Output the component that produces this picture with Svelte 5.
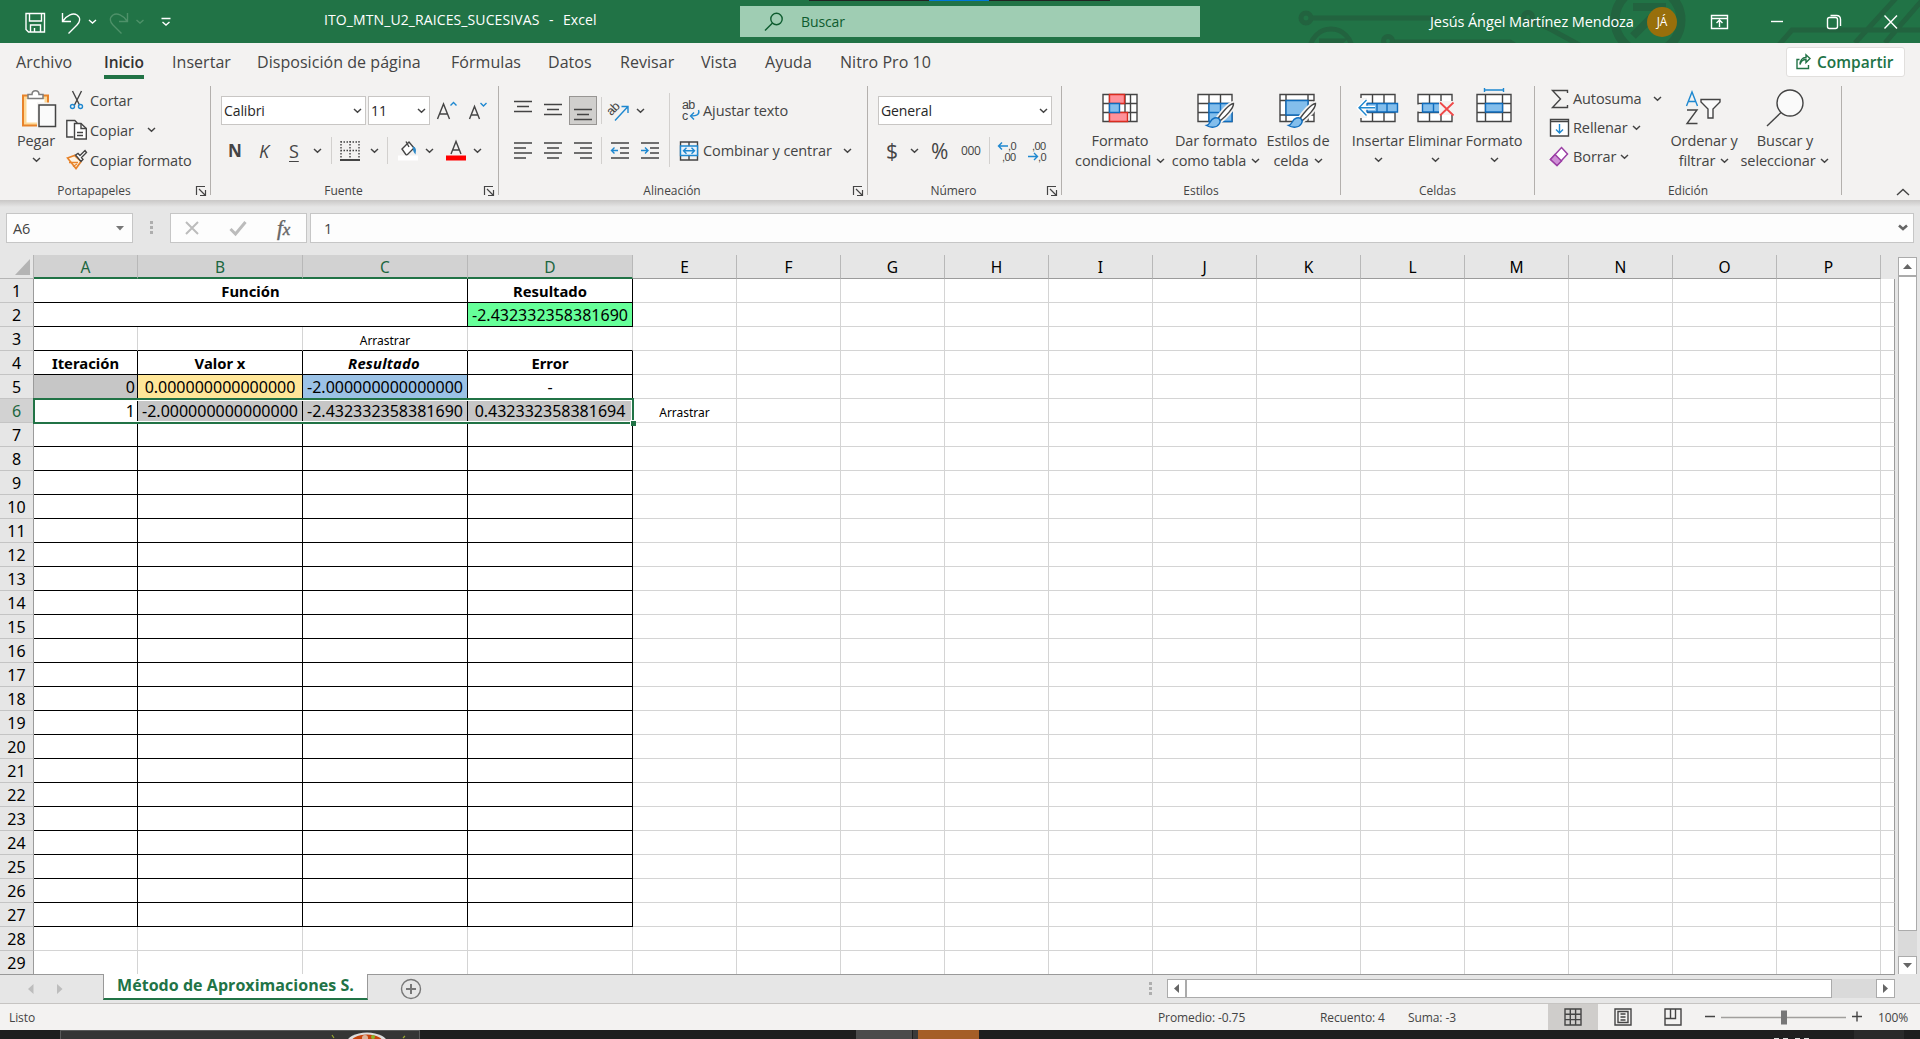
<script>
  // --- Ribbon tabs ---
  const tabs = [
    { name: 'Archivo', width: 88 },
    { name: 'Inicio', width: 68 },
    { name: 'Insertar', width: 85 },
    { name: 'Disposición de página', width: 194 },
    { name: 'Fórmulas', width: 97 },
    { name: 'Datos', width: 72 },
    { name: 'Revisar', width: 81 },
    { name: 'Vista', width: 64 },
    { name: 'Ayuda', width: 75 },
    { name: 'Nitro Pro 10', width: 110 },
  ];

  // --- Sheet data ---
  const columns = 'ABCDEFGHIJKLMNOP'.split('');
  const emptyColumns = columns.slice(4);

  const cells = {
    4: [
      { text: 'Iteración', cls: 'bold' },
      { text: 'Valor x', cls: 'bold' },
      { text: 'Resultado', cls: 'bold italic' },
      { text: 'Error', cls: 'bold' },
    ],
    5: [
      { text: '0', cls: 'right gray' },
      { text: '0.000000000000000', cls: 'yellow' },
      { text: '-2.000000000000000', cls: 'blue' },
      { text: '-', cls: '' },
    ],
    6: [
      { text: '1', cls: 'right' },
      { text: '-2.000000000000000', cls: 'gray' },
      { text: '-2.432332358381690', cls: 'gray' },
      { text: '0.432332358381694', cls: 'gray' },
    ],
  };
  const blank = [0, 1, 2, 3].map(() => ({ text: '', cls: '' }));

  let rows = [];
  for (let n = 1; n <= 29; n++) {
    let row = cells[n] || blank;
    if (n === 1) row = [{ text: 'Función', cls: 'merged bold' }, { text: 'Resultado', cls: 'bold' }];
    if (n === 2) row = [{ text: '', cls: 'merged' }, { text: '-2.432332358381690', cls: 'green' }];
    if (n === 3) row = blank.map((c, i) => (i === 2 ? { text: 'Arrastrar', cls: 'small' } : c));
    rows.push({ n, row, boxed: n !== 3 && n < 28 });
  }
</script>

{#snippet chev()}
  <svg class="chev" width="9" height="6" viewBox="0 0 9 6"><path d="M1 1l3.500 3.200L8 1" /></svg>
{/snippet}

{#snippet caption(text, launcher)}
  <div class="caption">
    <span>{text}</span>
    {#if launcher}
      <svg width="22" height="12" viewBox="0 0 22 12"><path d="M8.500 10V1.500H17M11 4l6 6M17.500 5v5.500H12" /></svg>
    {/if}
  </div>
{/snippet}

{#snippet brush()}
  <path d="M37.500 10.500C33 11 25 21 22 25.500l2.500 2C29 24 38 15 37.500 10.500z" fill="#f3f2f1" stroke="#f3f2f1" stroke-width="5" />
  <path d="M37.500 10.500C33 11 25 21 22 25.500l2.500 2C29 24 38 15 37.500 10.500z" fill="#fff" />
  <path d="M10.500 32.500c4-.5 3-6 8-7.500 4-1 7 2 5 5.500-2.500 4.500-9 4.500-13 2z" class="bluebox" />
{/snippet}

<div class="window">
  <!-- Title bar -->
  <header class="titlebar">
    <svg class="circuit" width="700" height="43" viewBox="1220 0 700 43">
      <circle cx="1306" cy="18" r="5" />
      <path d="M1312 18h123M1394 42h116l12 8M1532 20l20 10 44 24M1778 46l14-16h128M1855 43l42-46M1885 43l40-46" />
      <circle cx="1331" cy="50" r="21" />
      <path d="M1319 42h20l-14 12" stroke-width="7" />
      <circle cx="1388" cy="41" r="4.500" />
      <circle cx="1528" cy="17" r="4.500" />
      <circle cx="1648" cy="20" r="33" stroke-width="9" />
      <path d="M1633 7h29v20M1662 7l-29 29" stroke-width="8" />
    </svg>
    <div class="quick">
      <svg width="182" height="24" viewBox="0 0 182 24">
        <path d="M2 2.500h18.500v18.500H4.500L2 18.500zM5.500 3v7h12V3M6.500 21v-7h10v7M10.500 21v-4" />
        <path d="M38.500 2v8.500H47M39 10C43 4 49 1.500 53 4c4 3 3 7 0 10l-8.500 8.500" />
        <path d="M65 9l3.500 3L72 9" />
        <g class="dim">
          <path d="M103.500 2v8.500H95M103 10C99 4 93 1.500 89 4c-4 3-3 7 0 10l8.500 8.500" />
          <path d="M112.500 9l3.500 3 3.500-3" />
        </g>
        <path d="M137.500 7.500h9M138.500 11l3.500 3 3.500-3" />
      </svg>
    </div>
    <div class="doc">ITO_MTN_U2_RAICES_SUCESIVAS&nbsp; -&nbsp; Excel</div>
    <div class="search">
      <svg width="20" height="20" viewBox="0 0 20 20"><circle cx="12.500" cy="7" r="5.700" /><path d="M8.500 11L1 18.500" /></svg>
      <span>Buscar</span>
    </div>
    <div class="user">Jesús Ángel Martínez Mendoza</div>
    <div class="avatar">JÁ</div>
    <svg class="controls" width="210" height="20" viewBox="0 0 210 20">
      <path d="M2.500 3.500h16v13h-16zM3 6.500h15M10.500 15V8.500M7.500 11l3-3 3 3" />
      <path d="M62 9.500h12" />
      <path d="M118.500 7.500q0-2 2-2h6q2 0 2 2v7q0 2-2 2h-6q-2 0-2-2zM121.500 3.500h6q4 0 4 4v6.500" />
      <path d="M175.500 3.500l12.500 13M188 3.500l-12.500 13" />
    </svg>
    <div class="topstrip"><i></i></div>
  </header>

  <!-- Ribbon tabs -->
  <nav class="tabs">
    {#each tabs as tab}
      <div class="tab" class:active={tab.name === 'Inicio'} style="width: {tab.width}px"><span>{tab.name}</span></div>
    {/each}
    <button class="share">
      <svg width="15" height="16" viewBox="0 0 15 16"><path d="M3.500 5.500H1v9h11.500V11M4 10.500C5 7 7 5.500 10 5.500V8.500l4-4-4-3.700V3.500C6 3.500 4 7 4 10.500z" /></svg>
      <span>Compartir</span>
    </button>
  </nav>

  <!-- Ribbon -->
  <section class="ribbon">
    <div class="group clipboard">
      <div class="body">
        <div class="big">
          <svg width="36" height="40" viewBox="0 0 36 40">
            <path d="M2 6.500h25v30H2z" fill="#fdd998" stroke="#e8832a" stroke-width="2" />
            <path d="M5.500 10h18v23.500h-18z" fill="#fff" stroke="none" />
            <path d="M7 9.500v-4h4c0-5 7-5 7 0h4v4z" fill="#fff" stroke="#7d7d7d" stroke-width="1.500" />
            <path d="M18 15.500h16.500v22H18z" fill="#fff" stroke="#f3f2f1" stroke-width="4" />
            <path d="M18 16h16.500v21.500H18z" fill="#fafafa" stroke-width="1.500" />
          </svg>
          <span>Pegar</span>
          {@render chev()}
        </div>
        <div class="list">
          <div>
            <svg width="22" height="22" viewBox="0 0 22 22"><path d="M6.500 2l7 14M15.500 2l-7 14" /><circle cx="6.500" cy="17.500" r="2" class="blue" /><circle cx="14.500" cy="17.500" r="2" class="blue" /></svg>
            <span>Cortar</span>
          </div>
          <div>
            <svg width="22" height="22" viewBox="0 0 22 22"><path d="M7.500 18H.8V1.500h8l2.500 2.500" fill="#fafafa" /><path d="M8.500 4.500h6.500l5.300 5v10.500H8.500z" fill="#fff" /><path d="M15 4.500v5h5.500M11 13.500h6M11 16.500h6" /></svg>
            <span>Copiar</span>{@render chev()}
          </div>
          <div>
            <svg width="22" height="22" viewBox="0 0 22 22"><path d="M1.500 9l7-2.500 6.500 6-5 7z" fill="#fdf3e3" stroke="#e8832a" stroke-width="1.700" /><path d="M3 13.500h9M7 17.500l4-2.500" stroke="#e8832a" /><path d="M9.500 6l2.500-1.500 2 2 5-5 1.500 2-5 5 1.500 2-2 2z" fill="#fff" /></svg>
            <span>Copiar formato</span>
          </div>
        </div>
      </div>
      {@render caption('Portapapeles', true)}
    </div>

    <div class="group font">
      <div class="body rows">
        <div class="line first">
          <div class="select">Calibri {@render chev()}</div>
          <div class="select">11 {@render chev()}</div>
          <svg width="30" height="24" viewBox="0 0 30 24"><path d="M5.500 20L11.500 5l6 15M7.500 15h8" /><path d="M18.500 6.500l3-3 3 3" class="blue" /></svg>
          <svg width="30" height="24" viewBox="0 0 30 24"><path d="M6.500 20L11.500 7.500l5 12.500M8 16h7" /><path d="M17.500 4l3 3 3-3" class="blue" /></svg>
        </div>
        <div class="line second">
          <b>N</b><em>K</em><u>S</u>{@render chev()}<i class="sep"></i>
          <svg width="20" height="20" viewBox="0 0 20 20"><path d="M.5 1h19M.5 9.500h19M1 0v18M10 0v18M19 0v18" stroke-dasharray="1.500 1.500" /><path d="M0 19h20" stroke-width="2" /></svg>
          {@render chev()}<i class="sep"></i>
          <svg width="22" height="22" viewBox="0 0 22 22"><path d="M5 9l7-7 5 6-7.500 7.500zM9 1.500l3 5.500" fill="#fff" /><path d="M16 6.500c4 1.500 3 4 2.500 8-2-2-3-5-2.500-8z" fill="#2b88c8" stroke="none" /><path d="M1 15.500h20v5H1z" fill="#fff" stroke="none" /></svg>
          {@render chev()}
          <svg width="22" height="22" viewBox="0 0 22 22"><path d="M6 14l5-12.500L16 14M8 10h6" /><path d="M1 15.500h20v5H1z" fill="#f00" stroke="none" /></svg>
          {@render chev()}
        </div>
      </div>
      {@render caption('Fuente', true)}
    </div>

    <div class="group align">
      <div class="body">
        <div class="rows">
          <div class="line first">
            <svg width="30" height="30" viewBox="0 0 30 30"><path d="M6 5.500h18M9 10.500h12M6 15.500h18" /></svg>
            <svg width="26" height="30" viewBox="0 0 26 30"><path d="M6 8.500h18M9 13.500h12M6 18.500h18" /></svg>
            <svg class="pressed" width="28" height="29" viewBox="0 0 28 29"><path d="M5 13.500h18M8 18.500h12M5 23.500h18" /></svg>
            <i class="sep"></i>
            <svg width="32" height="26" viewBox="0 0 32 26"><text x="5" y="16" class="ab" transform="rotate(-45 10 12)">ab</text><path d="M13 22.500L25.500 9M19.500 8.500h6.500v6.500" class="blue" /></svg>
            {@render chev()}
          </div>
          <div class="line second">
            <svg width="30" height="22" viewBox="0 0 30 22"><path d="M6 3h18M6 8h12M6 13h18M6 18h12" /></svg>
            <svg width="30" height="22" viewBox="0 0 30 22"><path d="M6 3h18M9 8h12M6 13h18M9 18h12" /></svg>
            <svg width="30" height="22" viewBox="0 0 30 22"><path d="M6 3h18M12 8h12M6 13h18M12 18h12" /></svg>
            <i class="sep"></i>
            <svg width="30" height="22" viewBox="0 0 30 22"><path d="M9 3h18M18 8h9M18 13h9M9 18h18" /><path d="M16 10.500H9.500M12.500 7.500l-3 3 3 3" class="blue" /></svg>
            <svg width="30" height="22" viewBox="0 0 30 22"><path d="M9 3h18M18 8h9M18 13h9M9 18h18" /><path d="M9 10.500h7M13 7.500l3 3-3 3" class="blue" /></svg>
          </div>
        </div>
        <i class="sep tall"></i>
        <div class="list wide">
          <div>
            <svg width="24" height="24" viewBox="0 0 24 24"><text x="3" y="11" class="ab">ab</text><text x="3" y="21.500" class="ab">c</text><path d="M19.500 12c1.500 4-1 6-8 6M15 14.500L11.500 18l3.500 3.500" class="blue" /></svg>
            <span>Ajustar texto</span>
          </div>
          <div>
            <svg width="24" height="22" viewBox="0 0 24 22"><path d="M1.500 2h17v18h-17zM10 2v4M10 16v4" /><path d="M1.500 6h17v9.500h-17z" fill="#e9f3fb" class="blue" /><path d="M4.500 10.700h11M7.500 7.700l-3 3 3 3M12.500 7.700l3 3-3 3" class="blue" /></svg>
            <span>Combinar y centrar</span>{@render chev()}
          </div>
        </div>
      </div>
      {@render caption('Alineación', true)}
    </div>

    <div class="group number">
      <div class="body rows">
        <div class="line first"><div class="select">General {@render chev()}</div></div>
        <div class="line second">
          <span class="sign">$</span>{@render chev()}<span class="sign">%</span><span class="zeros">000</span><i class="sep"></i>
          <svg width="30" height="24" viewBox="0 0 30 24"><text x="18" y="11">,0</text><text x="12" y="22">,00</text><path d="M8.500 7H18M12 3.500L8.500 7l3.500 3.500" class="blue" /></svg>
          <svg width="30" height="24" viewBox="0 0 30 24"><text x="12" y="11">,00</text><text x="18" y="22">,0</text><path d="M8 17.500h9.500M14 14l3.500 3.500L14 21" class="blue" /></svg>
        </div>
      </div>
      {@render caption('Número', true)}
    </div>

    <div class="group styles">
      <div class="body">
        <div class="big">
          <svg width="38" height="36" viewBox="0 0 38 36"><path d="M2 1.500h34v27H2zM2 10.500h34M2 19.500h34M8.500 1.500v27M29.500 1.500v27M24 1.500v27" fill="#fff" /><path d="M8.500 1.500h15v9h-15zM8.500 19.500h18v9h-18z" class="redbox" /><path d="M8.500 10.500h10v9h-10z" class="bluebox" /></svg>
          <span>Formato</span><span>condicional {@render chev()}</span>
        </div>
        <div class="big">
          <svg width="40" height="36" viewBox="0 0 40 36"><path d="M2 1.500h34v27H2zM2 10.500h34M2 19.500h34M13 1.500v27M24.500 1.500v27" fill="#fff" /><path d="M13 10.500h23v18H13zM13 19.500h23M24.500 10.500v18" class="bluebox" />{@render brush()}</svg>
          <span>Dar formato</span><span>como tabla {@render chev()}</span>
        </div>
        <div class="big">
          <svg width="40" height="36" viewBox="0 0 40 36"><path d="M2 1.500h34v27H2zM2 7.500h34M2 22h34M8 1.500v27M30 1.500v27" fill="#fff" /><path d="M8 7.500h22V22H8z" class="bluebox" />{@render brush()}</svg>
          <span>Estilos de</span><span>celda {@render chev()}</span>
        </div>
      </div>
      {@render caption('Estilos', false)}
    </div>

    <div class="group cells">
      <div class="body">
        <div class="big">
          <svg width="42" height="36" viewBox="0 0 42 36"><path d="M4 1.500h34v27H4zM4 10.500h34M4 19.500h34M15.500 1.500v27M27 1.500v27" fill="#fff" /><path d="M0 5h10v20H0z" fill="#f3f2f1" stroke="none" /><path d="M10 10.500h30.500v8.500H10zM20 10.500V19M30 10.500V19" class="bluebox" /><path d="M2 14.800h16M9.500 7L2 14.800l7.500 7.700" stroke="#fff" stroke-width="4" /><path d="M2 14.800h16M9.500 7L2 14.800l7.500 7.700" class="blue" /></svg>
          <span>Insertar</span>{@render chev()}
        </div>
        <div class="big">
          <svg width="42" height="36" viewBox="0 0 42 36"><path d="M4 1.500h34v27H4zM4 10.500h34M4 19.500h34M15.500 1.500v27M27 1.500v27" fill="#fff" /><path d="M2 11.500h6v7H2z" fill="#f3f2f1" stroke="none" /><path d="M8.500 10.500h20l5 4-5 4.500h-20zM19.500 10.500V19" class="bluebox" /><path d="M25 8h16v14H25z" fill="#f3f2f1" stroke="none" /><path d="M26 9.500l13.500 13M39.500 9.500L26 22.500" stroke="#f04848" stroke-width="1.800" /></svg>
          <span>Eliminar</span>{@render chev()}
        </div>
        <div class="big">
          <svg class="over" width="42" height="42" viewBox="0 -6 42 42"><path d="M4 1.500h34v27H4zM4 10.500h34M4 19.500h34M12.500 1.500v27M29.500 1.500v27" fill="#fff" /><path d="M12.500 10.500h17v8.500h-17z" class="bluebox" /><path d="M11.500-5v4M30.500-5v4M11.500-3h19" class="blue" /></svg>
          <span>Formato</span>{@render chev()}
        </div>
      </div>
      {@render caption('Celdas', false)}
    </div>

    <div class="group edit">
      <div class="body">
        <div class="list tight">
          <div><svg width="24" height="22" viewBox="0 0 24 22"><path d="M18.500 5V2.500H3.500l8 8.500-8 8.500h15V17" /></svg><span>Autosuma</span>{@render chev()}</div>
          <div><svg width="24" height="22" viewBox="0 0 24 22"><path d="M1.500 2.500h18v16.500h-18zM1.500 4.500h18" fill="#fff" /><path d="M10.500 7v9M7 12.500l3.500 3.500 3.500-3.500" class="blue" /></svg><span>Rellenar</span>{@render chev()}</div>
          <div><svg width="24" height="22" viewBox="0 0 24 22"><path d="M12.500 1.500l6 6.500-10.500 11.500-6.500-6z" fill="#fff" stroke="#9b3fa5" stroke-width="1.500" /><path d="M6 8.500l6.500 6.500L8 19.500l-6.500-6z" fill="#cf8fd6" stroke="#9b3fa5" stroke-width="1.500" /></svg><span>Borrar</span>{@render chev()}</div>
        </div>
        <div class="big sort">
          <svg width="40" height="40" viewBox="0 0 40 40"><path d="M2.500 17L8 3l5.500 14M4 12.500h8" class="blue" /><path d="M3 21h10L3 34.500h10.500" /><path d="M17 10.500h19v2.500l-7 7v9h-5v-9l-7-7z" fill="#fafafa" /></svg>
          <span>Ordenar y</span><span>filtrar {@render chev()}</span>
        </div>
        <div class="big find">
          <svg width="40" height="40" viewBox="0 0 40 40"><circle cx="25" cy="14" r="13" fill="#fafafa" /><path d="M16 23.500L2 37" /></svg>
          <span>Buscar y</span><span>seleccionar {@render chev()}</span>
        </div>
      </div>
      {@render caption('Edición', false)}
    </div>
    <svg class="collapse" width="14" height="8" viewBox="0 0 14 8"><path d="M1 7l6-5.500L13 7" /></svg>
  </section>

  <!-- Formula bar -->
  <section class="formula">
    <div class="box name">A6 <svg width="8" height="5" viewBox="0 0 8 5"><path d="M0 0h8L4 4.500z" /></svg></div>
    <div class="dots"><i></i><i></i><i></i></div>
    <div class="box fx">
      <svg width="17" height="16" viewBox="0 0 17 16"><path d="M2 2l12 12M14 2L2 14" class="x" /></svg>
      <svg width="18" height="16" viewBox="0 0 18 16"><path d="M1.500 9l5 5L16.500 2" class="ok" /></svg>
      <em>f<small>x</small></em>
    </div>
    <div class="box value">1 <svg width="10" height="8" viewBox="0 0 10 8"><path d="M1 1.500l4 3.500 4-3.500" class="arrow" /></svg></div>
  </section>

  <!-- Worksheet -->
  <section class="work">
    <div class="sheet">
      <div class="heads">
        <div class="corner"><i></i></div>
        {#each columns as letter, i}
          <div class="head" class:wide={i > 0 && i < 4} class:picked={i < 4}>{letter}</div>
        {/each}
      </div>
      {#each rows as r}
        <div class="row">
          <div class="num" class:picked={r.n === 6}>{r.n}</div>
          {#each r.row as cell, i}
            <div class="cell {cell.cls}" class:wide={i > 0} class:boxed={r.boxed} class:under={r.n === 3}>{cell.text}</div>
          {/each}
          {#each emptyColumns as letter}
            <div class="cell small">{r.n === 6 && letter === 'E' ? 'Arrastrar' : ''}</div>
          {/each}
          <div class="cell rest"></div>
        </div>
      {/each}
      <div class="selection"><i></i></div>
    </div>
    <div class="vscroll">
      <div class="btn"><svg width="9" height="5" viewBox="0 0 9 5"><path d="M0 5h9L4.500 0z" /></svg></div>
      <div class="thumb"></div>
      <div class="btn last"><svg width="9" height="5" viewBox="0 0 9 5"><path d="M0 0h9L4.500 5z" /></svg></div>
    </div>
  </section>

  <!-- Sheet tabs and horizontal scroll -->
  <section class="bottom">
    <div class="arrows">
      <svg width="36" height="10" viewBox="0 0 36 10"><path d="M5.500 0v10L0 5zM29 0v10l5.500-5z" /></svg>
    </div>
    <div class="sheettab">Método de Aproximaciones S.</div>
    <svg class="add" width="22" height="22" viewBox="0 0 22 22"><circle cx="11" cy="11" r="9.500" /><path d="M11 6v10M6 11h10" /></svg>
    <div class="dots"><i></i><i></i><i></i></div>
    <div class="hscroll">
      <div class="btn"><svg width="5" height="9" viewBox="0 0 5 9"><path d="M5 0v9L0 4.500z" /></svg></div>
      <div class="thumb"></div>
      <div class="btn last"><svg width="5" height="9" viewBox="0 0 5 9"><path d="M0 0v9l5-4.500z" /></svg></div>
    </div>
  </section>

  <!-- Status bar -->
  <footer class="status">
    <span class="ready">Listo</span>
    <span class="avg">Promedio: -0.75</span>
    <span class="count">Recuento: 4</span>
    <span class="sum">Suma: -3</span>
    <div class="view on"><svg width="18" height="18" viewBox="0 0 18 18"><path d="M1 1h16v16H1zM6.300 1v16M11.600 1v16M1 6.300h16M1 11.600h16" /></svg></div>
    <div class="view"><svg width="18" height="18" viewBox="0 0 18 18"><path d="M1 1h16v16H1zM4 3.500h10v11H4zM6.500 6h5M6.500 9h5M6.500 12h5" /></svg></div>
    <div class="view"><svg width="18" height="18" viewBox="0 0 18 18"><path d="M1 1h16v16H1zM1 10.500h10.500V1M6.500 1v9.500" /></svg></div>
    <svg class="zoom" width="164" height="18" viewBox="0 0 164 18">
      <path d="M7 8.500h10M154 8.500h10M159 3.500v10" />
      <path d="M23 9.500h125" stroke="#a19f9d" />
      <path d="M83 2.500h6v14h-6z" fill="#777" stroke="none" />
    </svg>
    <span class="percent">100%</span>
  </footer>

  <!-- Visible edge of the desktop taskbar -->
  <div class="taskbar">
    <div class="news">
      <svg width="90" height="8" viewBox="0 0 90 8"><path d="M2 4l2 3M73 7l2-2" stroke="#9aa832" stroke-width="1.200" /><ellipse cx="37" cy="13" rx="21" ry="11.500" fill="#ddd" /><ellipse cx="37" cy="13" rx="17" ry="9.500" fill="#c8430c" /><circle cx="35" cy="7" r="3" fill="#dcb29a" /><circle cx="43" cy="6" r="2" fill="#86b52c" /></svg>
    </div>
    <div class="app"></div>
    <div class="app narrow"></div>
    <div class="app orange"></div>
    <div class="clock"><i></i><i></i><i></i><i></i></div>
    <div class="tray"></div>
  </div>
</div>

<style>
  :global(body) {
    margin: 0;
    overflow: hidden;
    background: #e6e6e6;
  }

  .window {
    width: 1920px;
    height: 1039px;
    display: flex;
    flex-direction: column;
    font-family: "Open Sans", "Noto Sans", sans-serif;
    font-size: 14.5px;
    letter-spacing: -0.1px;
    color: #444;
    white-space: nowrap;
    overflow: hidden;
  }

  svg {
    display: block;
    flex: none;
    fill: none;
    stroke: #444;
    stroke-width: 1.4;
    overflow: visible;
  }

  svg text {
    fill: #444;
    stroke: none;
    font-family: "Liberation Sans", sans-serif;
    font-size: 11px;
    letter-spacing: -0.6px;
  }

  svg .ab { font-size: 12.5px; }

  .blue { stroke: #1e88d0; }
  svg .bluebox { fill: #83beec; stroke: #0f6cbd; }
  .redbox { fill: #ff9199; stroke: #d92c20; }

  .chev {
    stroke: #444;
    stroke-width: 1.5;
  }

  /* --- Title bar --- */
  .titlebar {
    position: relative;
    height: 43px;
    flex: none;
    display: flex;
    align-items: center;
    background: #217346;
    color: #fff;
  }

  .titlebar svg { stroke: #fff; }

  .titlebar .circuit {
    position: absolute;
    right: 0;
    top: 0;
    stroke: #22633f;
    stroke-width: 5;
    overflow: hidden;
  }

  .quick {
    width: 300px;
    padding-left: 24px;
    margin-top: 3px;
  }

  .quick .dim { stroke: #4e9169; }

  .doc {
    width: 416px;
    margin-top: -5px;
    font-size: 14px;
    letter-spacing: 0.1px;
    word-spacing: 1px;
  }

  .search {
    width: 460px;
    height: 31px;
    box-sizing: border-box;
    padding-left: 24px;
    display: flex;
    align-items: center;
    gap: 17px;
    background: #9fcdb3;
    color: #0e5c2f;
    font-size: 14px;
  }

  .search svg { stroke: #0e5c2f; }

  .user {
    position: relative;
    width: 217px;
    margin-left: 230px;
    font-size: 14.5px;
    letter-spacing: -0.08px;
  }

  .avatar {
    position: relative;
    width: 30px;
    height: 30px;
    border-radius: 50%;
    background: #986f0b;
    font-size: 12px;
    line-height: 30px;
    text-align: center;
  }

  .controls {
    position: relative;
    margin-left: 32px;
  }

  .topstrip {
    position: absolute;
    top: 0;
    left: 809px;
    width: 301px;
    height: 1px;
    background: #222;
  }

  .topstrip i {
    display: block;
    width: 60px;
    height: 1px;
    margin-left: 120px;
    background: #0078d7;
  }

  /* --- Tabs --- */
  .tabs {
    height: 38px;
    flex: none;
    display: flex;
    padding: 0 15px 0 16px;
    background: #f3f2f1;
    font-size: 16px;
    letter-spacing: 0.05px;
  }

  .tab span {
    display: inline-block;
    height: 32px;
    line-height: 39px;
  }

  .tab.active {
    font-weight: 600;
    font-size: 15.5px;
    letter-spacing: -0.1px;
    color: #333;
  }

  .tab.active span { border-bottom: 4px solid #217346; }

  .share {
    width: 119px;
    height: 30px;
    box-sizing: border-box;
    margin: 4px 0 0 auto;
    display: flex;
    align-items: center;
    gap: 6px;
    padding: 0 0 0 9px;
    border: 1px solid #e1dfdd;
    border-radius: 3px;
    background: #fff;
    font: 600 15.5px "Open Sans", sans-serif;
    color: #217346;
  }

  .share svg { stroke: #217346; }

  /* --- Ribbon --- */
  .ribbon {
    height: 119px;
    flex: none;
    display: flex;
    background: #f3f2f1;
  }

  .group {
    height: 109px;
    margin-top: 5px;
    box-sizing: border-box;
    border-right: 1px solid #b3b0ad;
    display: flex;
    flex-direction: column;
  }

  .clipboard { width: 211px; }
  .font { width: 288px; }
  .align { width: 369px; }
  .number { width: 194px; }
  .styles { width: 279px; }
  .cells { width: 194px; }
  .edit { width: 307px; }

  .body {
    height: 99px;
    flex: none;
    display: flex;
  }

  .body.rows { flex-direction: column; }

  .caption {
    height: 12px;
    display: flex;
    align-items: center;
    font-size: 12px;
    line-height: 12px;
    letter-spacing: -0.05px;
  }

  .caption span {
    flex: 1;
    text-align: center;
  }

  .caption svg { stroke-width: 1.2; }

  .big {
    display: flex;
    flex-direction: column;
    align-items: center;
    line-height: 20px;
  }

  .big > svg:first-child { margin-bottom: 2px; }
  .big > .chev { margin-top: 6px; }

  .big span {
    display: flex;
    align-items: center;
    gap: 5px;
  }

  .clipboard .big {
    width: 56px;
    margin: 3px 0 0 8px;
  }

  .clipboard .big > svg:first-child { margin: 0 0 2px 5px; }

  .list {
    margin: -1px 0 0 2px;
    display: flex;
    flex-direction: column;
  }

  .list > div {
    height: 30px;
    display: flex;
    align-items: center;
  }

  .list span { margin-left: 2px; }
  .list .chev { margin-left: 13px; }

  .line {
    display: flex;
    align-items: center;
  }

  .line.first {
    height: 29px;
    margin-top: 10px;
  }

  .line.second {
    height: 29px;
    margin-top: 11px;
  }

  .select {
    height: 27px;
    padding: 0 3px 0 2px;
    display: flex;
    align-items: center;
    justify-content: space-between;
    border: 1px solid #c8c6c4;
    background: #fff;
    color: #262626;
    font-size: 14px;
  }

  .sep {
    width: 1px;
    height: 27px;
    background: #d2d0ce;
  }

  .font .line.first { display: grid; grid-template-columns: 147px 64px 31px 30px; margin-left: 10px; }
  .font .select { margin-right: 2px; }

  .font .line.second {
    display: grid;
    grid-template-columns: 31px 30px 24px 18px 9px 30px 17px 10px 28px 20px 28px 9px;
    margin-left: 17px;
    font-size: 18px;
  }

  .font .line b { font-weight: 700; font-size: 17px; }
  .font .line u { text-underline-offset: 3px; }

  .align .first .chev { margin-left: 2px; }
  .align .rows { width: 170px; padding-left: 9px; box-sizing: border-box; }
  .align .first .pressed { background: #d0cfcd; outline: 1px solid #979593; outline-offset: -1px; margin-left: 5px; }
  .align .first .sep { margin-left: 4px; }
  .align .second .sep { margin-left: 3px; }
  .align .tall { height: 74px; margin-top: 7px; }
  .align .list { margin: 9px 0 0 9px; }
  .align .list > div { height: 30px; }
  .align .list > div + div { margin-top: 11px; height: 29px; }
  .align .list span { margin-left: 0; }
  .align .list .chev { margin-left: 11px; }

  .number .select { width: 167px; margin-left: 10px; }

  .number .line.second {
    display: grid;
    grid-template-columns: 24px 21px 30px 28px 1px 30px 30px;
    margin-left: 18px;
  }

  .sign {
    font-size: 21px;
    line-height: 26px;
    font-weight: 400;
  }

  .zeros { font-size: 12px; letter-spacing: -0.3px; }

  .styles .big { margin-top: 7px; }
  .styles .big:first-child { width: 90px; margin-left: 13px; }
  .styles .big:nth-child(2) { width: 102px; }
  .styles .big:nth-child(3) { width: 62px; }

  .cells .big { width: 58px; margin-top: 7px; }
  .cells .big:first-child { margin-left: 8px; width: 58px; }
  .cells .big:nth-child(2) { width: 56px; }
  .cells .big:nth-child(3) { width: 62px; }
  .cells .over { margin-top: -6px; }

  .edit .list { width: 122px; margin: -2px 0 0 14px; }
  .edit .list > div { height: 29px; }
  .edit .list span { margin-left: 0; }
  .edit .list .chev { margin-left: 4px; }
  .edit .list > div:first-child .chev { margin-left: 12px; }
  .sort { width: 68px; margin: 3px 0 0 -1px; }
  .find { width: 96px; margin: 3px 0 0 -1px; }

  .collapse { margin: 107px 0 0 54px; }

  /* --- Formula bar --- */
  .formula {
    height: 55px;
    flex: none;
    padding: 13px 6px 0;
    box-sizing: border-box;
    display: flex;
    background: linear-gradient(#c9c7c6, #e6e6e6 7px);
  }

  .box {
    height: 30px;
    box-sizing: border-box;
    display: flex;
    align-items: center;
    border: 1px solid #c6c6c6;
    background: #fdfdfd;
    color: #444;
  }

  .box svg { stroke: none; fill: #777; }

  .name {
    width: 127px;
    padding: 0 8px 0 6px;
    justify-content: space-between;
  }

  .dots {
    display: flex;
    flex-direction: column;
    gap: 2px;
  }

  .dots i {
    width: 3px;
    height: 3px;
    background: #aeaeae;
  }

  .formula .dots { margin: 8px 16px 0 17px; width: 4px; }

  .fx { width: 137px; padding-left: 13px; }
  .fx .x { stroke: #bcbcbc; stroke-width: 2; fill: none; }
  .fx .ok { stroke: #bcbcbc; stroke-width: 3; fill: none; }
  .fx svg + svg { margin-left: 28px; }

  .fx em {
    margin-left: 30px;
    font: italic 21px "Liberation Serif", serif;
    color: #666;
    -webkit-text-stroke: 0.4px #666;
  }

  .fx small { font-size: 17px; }

  .value {
    flex: 1;
    margin-left: 3px;
    padding: 0 5px 0 13px;
    justify-content: space-between;
  }

  .value .arrow { fill: none; stroke: #666; stroke-width: 2.6; }

  /* --- Worksheet --- */
  .work {
    height: 719px;
    flex: none;
    display: flex;
  }

  .sheet {
    position: relative;
    width: 1895px;
    height: 719px;
    box-sizing: border-box;
    overflow: hidden;
    font-family: "Noto Sans", "Open Sans", sans-serif;
    font-size: 16px;
    letter-spacing: 0;
    color: #000;
  }

  .heads, .row {
    display: flex;
    height: 24px;
  }

  .corner {
    width: 34px;
    height: 24px;
    flex: none;
    box-sizing: border-box;
    border-right: 1px solid #b5b5b5;
    border-bottom: 1px solid #b5b5b5;
    padding: 4px 0 0 15px;
  }

  .corner i {
    display: block;
    width: 15px;
    height: 16px;
    background: #b4b4b4;
    clip-path: polygon(100% 0, 100% 100%, 0 100%);
  }

  .head, .cell {
    width: 104px;
    height: 24px;
    flex: none;
    box-sizing: border-box;
    line-height: 24px;
    text-align: center;
  }

  .head {
    border-right: 1px solid #b8b8b8;
    border-bottom: 1px solid #9b9b9b;
    font-size: 15.5px;
  }

  .head.picked {
    background: #d2d2d2;
    border-bottom: 2px solid #217346;
    color: #1c6640;
  }

  .head.wide, .cell.wide { width: 165px; }

  .num {
    width: 34px;
    height: 24px;
    flex: none;
    box-sizing: border-box;
    border-right: 1px solid #9b9b9b;
    border-bottom: 1px solid #c4c4c4;
    line-height: 25px;
    text-align: center;
  }

  .num.picked { background: #d2d2d2; color: #1c6640; }

  .cell {
    border-right: 1px solid #d4d4d4;
    border-bottom: 1px solid #d4d4d4;
    background: #fff;
    line-height: 25px;
  }

  .cell.merged { width: 434px; }
  .cell.boxed { border-color: #000; }
  .cell.under { border-bottom-color: #000; }
  .cell.rest { width: 14px; border-right-color: #9b9b9b; }
  .bold { font-weight: 700; font-size: 14.8px; }
  .italic { font-style: italic; letter-spacing: 0.2px; padding-right: 2px; }
  .cell.small { font-size: 12px; line-height: 28px; }
  .right { text-align: right; padding-right: 2px; }
  .cell.green { background: #66ff99; }
  .cell.gray { background: #c6c6c6; }
  .cell.yellow { background: #ffe699; }
  .cell.blue { background: #9bc2e6; }

  .selection {
    position: absolute;
    left: 33px;
    top: 143px;
    width: 601px;
    height: 26px;
    box-sizing: border-box;
    border: 2px solid #217346;
    box-shadow: inset 0 0 0 1px #fff;
  }

  .selection i {
    position: absolute;
    right: -4px;
    bottom: -4px;
    width: 5px;
    height: 5px;
    background: #217346;
    border: solid #fff;
    border-width: 1px 0 0 1px;
  }

  .vscroll {
    width: 19px;
    margin: 2px 0 0 3px;
    height: 718px;
    display: flex;
    flex-direction: column;
    background: #dadada;
  }

  .btn, .thumb {
    box-sizing: border-box;
    border: 1px solid #ababab;
    background: #fff;
  }

  .btn {
    width: 19px;
    height: 19px;
    flex: none;
    display: flex;
    align-items: center;
    justify-content: center;
  }

  .btn svg { fill: #666; stroke: none; }
  .vscroll .thumb { height: 655px; }
  .vscroll .last { margin-top: auto; }

  /* --- Sheet tabs --- */
  .bottom {
    height: 30px;
    flex: none;
    display: flex;
    box-sizing: border-box;
    border-bottom: 1px solid #c6c4c2;
    background: linear-gradient(#999, #999) 0 0 / 1895px 1px no-repeat #e6e6e6;
  }

  .arrows { width: 75px; padding: 10px 0 0 28px; }
  .arrows svg { fill: #bdbdbd; stroke: none; }

  .sheettab {
    width: 265px;
    height: 26px;
    box-sizing: border-box;
    border: solid #999;
    border-width: 0 1px;
    border-bottom: 2px solid #217346;
    background: #fff;
    color: #217346;
    font: 700 16px/22px "Open Sans", sans-serif;
    letter-spacing: 0.05px;
    text-align: center;
  }

  .add {
    margin: 4px 0 0 32px;
    stroke: #777;
  }

  .add path { stroke-width: 2; }
  .bottom .dots { margin: 8px 15px 0 727px; }

  .hscroll {
    width: 728px;
    height: 19px;
    margin-top: 5px;
    display: flex;
    background: #dadada;
  }

  .hscroll .thumb { width: 646px; }
  .hscroll .last { margin-left: auto; }

  /* --- Status bar --- */
  .status {
    height: 26px;
    flex: none;
    display: flex;
    align-items: center;
    background: #f3f2f1;
    font-size: 12px;
    letter-spacing: -0.1px;
  }

  .status svg { stroke: #444; }
  .ready { width: 1149px; padding-left: 9px; }
  .avg { width: 162px; }
  .count { width: 88px; }
  .sum { width: 140px; }

  .view {
    width: 50px;
    height: 26px;
    display: flex;
    align-items: center;
    justify-content: center;
  }

  .view.on { background: #cfcdcb; }
  .percent { margin-left: 16px; }

  /* --- Taskbar --- */
  .taskbar {
    height: 9px;
    flex: none;
    display: flex;
    background: #1e1e1e;
  }

  .news {
    width: 360px;
    height: 9px;
    margin-left: 60px;
    box-sizing: border-box;
    border: 1px solid #5a5a5a;
    border-bottom: 0;
    padding-left: 269px;
    background: #353535;
    overflow: hidden;
  }

  .news svg { stroke: none; }

  .app { width: 56px; height: 9px; margin-left: 436px; background: #4b4b4b; }
  .app.narrow { width: 5px; margin-left: 1px; background: #3a3a3a; }
  .app.orange { width: 61px; margin-left: 0; background: #a55e27; }

  .clock {
    width: 80px;
    margin-left: 795px;
    padding-top: 8px;
    display: flex;
    gap: 4px;
  }

  .clock i { width: 5px; height: 1px; background: #ddd; }
  .clock i:nth-child(3) { margin-left: 3px; }
  .tray { width: 50px; height: 9px; background: #2a2a2a; }
</style>
